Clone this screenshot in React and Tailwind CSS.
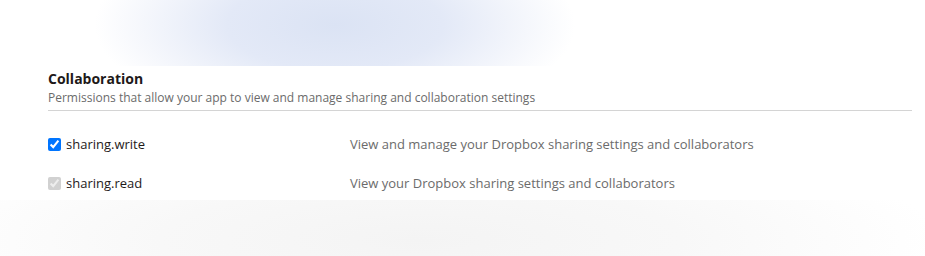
export default function App() {
  const font = { fontFamily: '"Open Sans", "Noto Sans", sans-serif' };
  return (
    <div className="w-[925px] h-[256px] bg-white overflow-hidden flex flex-col" style={font}>
      <div className="h-[66px] shrink-0 bg-[radial-gradient(ellipse_240px_100px_at_335px_25px,#dbe3f4_0%,#e3e9f7_45%,#f5f7fc_80%,#ffffff_100%)]" />
      <div className="h-[134px] shrink-0 bg-white pl-[48px] pr-[13px] overflow-hidden">
        <div className="pt-[3px] pb-[3px] border-b border-[#d4d4d4]">
          <div className="text-[14px] leading-[20px] font-bold text-[#1e1919]">Collaboration</div>
          <div className="text-[12px] leading-[18px] text-[#6b6b6b]">
            Permissions that allow your app to view and manage sharing and collaboration settings
          </div>
        </div>
        <div className="pt-[14px] flex flex-col">
          <div className="h-[39px] flex items-center">
            <label className="w-[302px] flex items-center gap-[5px] text-[13px] text-[#1e1919]">
              <input type="checkbox" defaultChecked className="m-0 w-[13px] h-[13px]" />
              <span>sharing.write</span>
            </label>
            <div className="text-[13px] text-[#6b6b6b]">View and manage your Dropbox sharing settings and collaborators</div>
          </div>
          <div className="h-[39px] flex items-center">
            <label className="w-[302px] flex items-center gap-[5px] text-[13px] text-[#1e1919]">
              <input type="checkbox" defaultChecked disabled className="m-0 w-[13px] h-[13px]" />
              <span>sharing.read</span>
            </label>
            <div className="text-[13px] text-[#6b6b6b]">View your Dropbox sharing settings and collaborators</div>
          </div>
        </div>
      </div>
      <div className="flex-1 bg-[radial-gradient(ellipse_520px_110px_at_420px_40px,#f4f4f4_0%,#f8f8f8_50%,#ffffff_100%)]" />
    </div>
  );
}
